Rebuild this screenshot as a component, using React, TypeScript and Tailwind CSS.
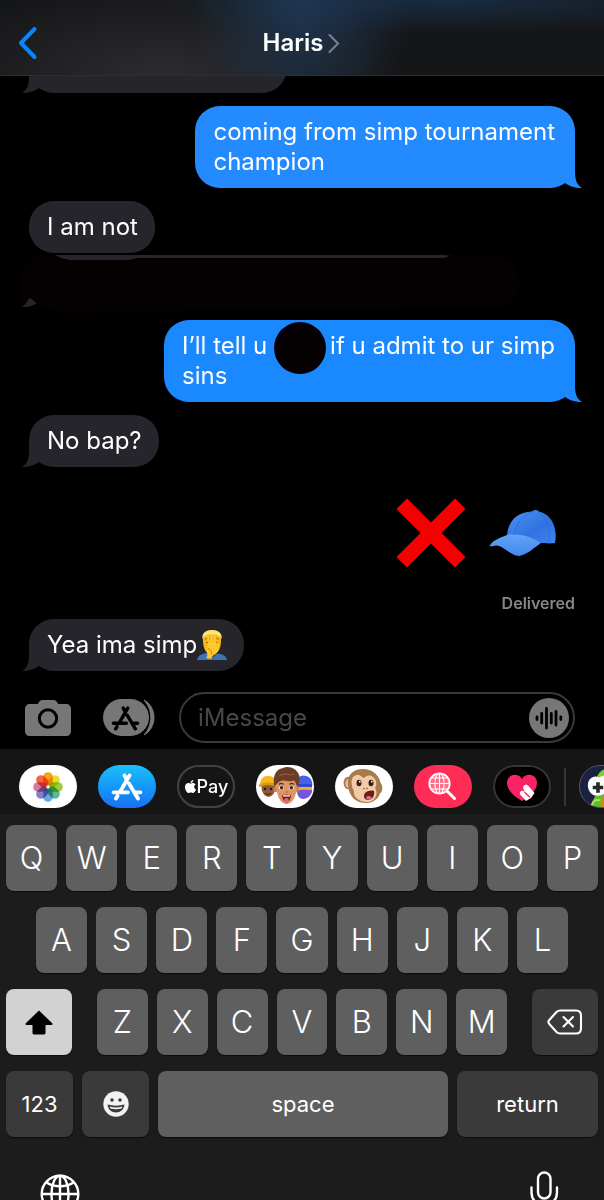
import React, { useState } from 'react';
import { FaApple } from 'react-icons/fa';

type Side = 'sent' | 'received';

function Tail({ side, className }: { side: Side; className: string }) {
  return (
    <svg
      aria-hidden="true"
      viewBox="0 0 24 24"
      className={`absolute bottom-0 h-6 w-6 ${side === 'sent' ? '-right-[7px]' : '-left-[7px] -scale-x-100'} ${className}`}
    >
      <path d="M17 0V8C17 16 19 21 24 24C17 24 11 22 7 19V0Z" fill="currentColor" />
    </svg>
  );
}

interface BubbleProps {
  side: Side;
  tail?: boolean;
  light?: boolean;
  className?: string;
  children?: React.ReactNode;
}

function Bubble({ side, tail = true, light = false, className = '', children }: BubbleProps) {
  const sentBg = light ? 'bg-[#248bff]' : 'bg-[#1a88ff]';
  const sentText = light ? 'text-[#248bff]' : 'text-[#1a88ff]';
  return (
    <div
      className={`relative min-h-[52px] shrink-0 rounded-[25px] py-[11px] text-2xl leading-[30px] text-white ${
        side === 'sent' ? `self-end pr-5 pl-[18px] ${sentBg}` : 'self-start bg-[#26252b] pr-[17px] pl-[18px]'
      } ${className}`}
    >
      {tail && <Tail side={side} className={side === 'sent' ? sentText : 'text-[#26252b]'} />}
      <p className="relative">{children}</p>
    </div>
  );
}

function FacepalmEmoji() {
  return (
    <svg role="img" aria-label="Man facepalming" viewBox="0 0 30 30" className="inline-block h-[30px] w-[30px] align-top">
      <path d="M0 30C1 25 6 23 11 23L16 27L19 24C24 23 29 25 30 30Z" fill="#3d72b4" />
      <path d="M6 11C5 4 10 0 15 0S25 4 24 11C24 18 21 24 15 26C9 24 6 18 6 11Z" fill="#f7b718" />
      <path d="M5.5 9C4.5 3 9 0 15 0S25.5 3 24.5 9C23 5.5 20 4 15 4.5C10 4 7 5.5 5.5 9Z" fill="#ffe27a" />
      <path d="M8 9.5C10 8 12 8 13 9.5M17 9.5C18 8 20 8 22 9.5M9 12.5H12.5M17 12.5H20.5" stroke="#a8690a" strokeWidth="1" fill="none" />
      <path d="M10 15C13 12 18 12 22 14C23 19 20 23 16 25L14 29L9 28C12 25 9 20 10 15Z" fill="#ffc82a" />
      <path d="M11 7L12.5 15M14.5 6L15 14M18 7L17.5 15" stroke="#ffce38" strokeWidth="1.8" strokeLinecap="round" />
      <path d="M11.5 18C12.5 21 15 20 14.5 24" stroke="#c07a0e" strokeWidth="1" fill="none" />
    </svg>
  );
}

function CrossEmoji() {
  return (
    <svg role="img" aria-label="Cross mark" viewBox="0 0 70 70" className="h-[70px] w-[70px]">
      <path d="M0.5 11L11 0.5L35 24.5L59 0.5L69.5 11L45.5 35L69.5 59L59 69.5L35 45.5L11 69.5L0.5 59L24.5 35Z" fill="#f40000" />
    </svg>
  );
}

function CapEmoji() {
  return (
    <svg role="img" aria-label="Billed cap" viewBox="0 0 68 48" className="h-12 w-[68px]">
      <defs>
        <linearGradient id="capCrown" x1="0" y1="0" x2="1" y2="1">
          <stop offset="0" stopColor="#4c94f5" />
          <stop offset="0.6" stopColor="#2f72e0" />
          <stop offset="1" stopColor="#3f86ef" />
        </linearGradient>
        <linearGradient id="capBill" x1="0" y1="0" x2="0" y2="1">
          <stop offset="0" stopColor="#62a4f7" />
          <stop offset="1" stopColor="#4287ee" />
        </linearGradient>
      </defs>
      <path d="M18 27C19 12 28 3 43 2.5C45 0.5 48 0.5 50 2.5C62 5 69 18 66 34C60 35 56 34 52 34C40 29 30 25 18 27Z" fill="url(#capCrown)" />
      <path d="M43 3C33 7 27 15 25 26M50 3C58 10 61 20 60 34" stroke="#2d68cf" strokeWidth="0.7" fill="none" />
      <path d="M18 26C30 24 42 27 52 34C46 38 38 46 30 47C22 47 16 38 8 36.5C5 36 3 38 0.5 37C3 32 10 29 18 26Z" fill="url(#capBill)" />
    </svg>
  );
}

function AppStoreGlyph({ className }: { className: string }) {
  return (
    <svg aria-hidden="true" viewBox="0 0 32 29" className={className}>
      <path
        d="M18.5 3.5L9.5 19M6.5 24L5 26.5M13.5 3.5L15 6.5M18 11.5L27 26.5M2.5 20.3H17M24.5 20.3H29.5"
        stroke="currentColor"
        strokeWidth="3.8"
        strokeLinecap="round"
        fill="none"
      />
    </svg>
  );
}

const PETALS = [
  { angle: 0, fill: '#f9a11b' },
  { angle: 45, fill: '#e6e02c' },
  { angle: 90, fill: '#9ccb3f' },
  { angle: 135, fill: '#5cb893' },
  { angle: 180, fill: '#67a9dc' },
  { angle: 225, fill: '#8a7fc0' },
  { angle: 270, fill: '#d27ca6' },
  { angle: 315, fill: '#f3664a' },
];

function PhotosIcon() {
  return (
    <svg aria-hidden="true" viewBox="0 0 32 32" className="h-8 w-8">
      {PETALS.map((petal) => (
        <rect
          key={petal.angle}
          x="11.2"
          y="1.2"
          width="9.6"
          height="13.5"
          rx="4.8"
          fill={petal.fill}
          transform={`rotate(${petal.angle} 16 16)`}
          className="mix-blend-multiply"
        />
      ))}
    </svg>
  );
}

function MemojiIcon() {
  return (
    <svg aria-hidden="true" viewBox="0 0 58 43" className="h-full w-full">
      {/* left, hard hat */}
      <ellipse cx="12.5" cy="22" rx="7" ry="10" fill="#8d5a3b" />
      <path d="M4 20C4 13 9 10 14 11C18 12 20 15 20 18L4 21Z" fill="#f6b81f" />
      <path d="M3 20C8 17 14 17 19 19V21C13 20 8 20 3 22Z" fill="#dc9610" />
      <circle cx="9" cy="24" r="1.2" fill="#2b1a12" />
      <circle cx="15" cy="24" r="1.2" fill="#2b1a12" />
      <path d="M9 28C11 30 13 30 15 28" stroke="#5b2f20" strokeWidth="1.3" fill="none" />
      {/* right, blue beanie */}
      <path d="M40 20C40 12 46 9 50 11C55 12 57 17 56 22L54 26H42Z" fill="#4562e8" />
      <path d="M40 19H56V23H40Z" fill="#3049ce" />
      <path d="M41 22H56V28H41Z" fill="#f3ae2a" />
      <path d="M41 26C46 24 52 25 56 25C56 30 52 34 47 34C43 34 41 30 41 26Z" fill="#7353df" />
      {/* centre */}
      <ellipse cx="19.5" cy="24" rx="2.2" ry="3.2" fill="#c97f52" />
      <ellipse cx="41" cy="24" rx="2.2" ry="3.2" fill="#c97f52" />
      <path d="M20 17C20 9 24 6 30 6C37 6 41 11 41 19C41 30 37 39 30.5 39C24 39 20 30 20 17Z" fill="#dd9766" />
      <path d="M18.5 22C16 11 20 4 27 3C34 0 43.5 5 43.5 13C43.5 17 42.5 20 41 22C40.5 19 39.5 17 38 15.5C32 18 28 13 23 17C21 18 20 20 18.5 22Z" fill="#6b3c26" />
      <path d="M23 11C28 7 33 11 39 9" stroke="#8f5a38" strokeWidth="1.2" fill="none" />
      <path d="M23 19.5C24.5 18 26.5 18.5 27.5 19.5M33.5 19.5C35 18 37 18.5 38 19.5" stroke="#5d301c" strokeWidth="1.3" fill="none" />
      <ellipse cx="25.5" cy="22.8" rx="2.4" ry="1.9" fill="#fff" />
      <ellipse cx="35.5" cy="22.8" rx="2.4" ry="1.9" fill="#fff" />
      <circle cx="25.6" cy="22.8" r="1.7" fill="#36211a" />
      <circle cx="35.4" cy="22.8" r="1.7" fill="#36211a" />
      <path d="M29.5 26.5C30 27.5 31.5 27.5 32 26.5" stroke="#b66f47" strokeWidth="1.2" fill="none" />
      <path d="M26 30C29 29.2 32 29.2 35 30C34.5 34.5 33 36.5 30.5 36.5S26.5 34.5 26 30Z" fill="#751d1b" />
      <path d="M26.8 30.2H34.2L33.8 31.4H27.2Z" fill="#fff" />
      <path d="M28.5 33.5C29.5 32.7 31.5 32.7 32.5 33.5L32.3 37.5C31 39 29.7 39 28.7 37.5Z" fill="#e2686c" />
    </svg>
  );
}

function MonkeyIcon() {
  return (
    <svg aria-hidden="true" viewBox="0 0 58 43" className="h-full w-full">
      <ellipse cx="13" cy="18" rx="4.4" ry="6.2" fill="#a77b4c" />
      <ellipse cx="13.3" cy="18.5" rx="2.8" ry="4.2" fill="#f1b99b" />
      <ellipse cx="44" cy="23" rx="3.4" ry="5.5" fill="#a77b4c" />
      <path d="M13 20C12 10 18 4 28 4C38 4 46 11 46 22C46 32 40 38 31 38C20 38 14 31 13 20Z" fill="#a77b4c" />
      <path d="M17 20C15 13 20 9 24 10C27 11 28 13 29 13C31 11 34 9 38 12C42 15 42 20 40 23C44 29 40 37 32 37C23 37 18 31 19 26C18 24 17 23 17 20Z" fill="#f3caa5" />
      <ellipse cx="24" cy="18" rx="2.5" ry="3.3" fill="#31201a" />
      <ellipse cx="36" cy="18" rx="2.5" ry="3.3" fill="#31201a" />
      <circle cx="24.8" cy="16.7" r="0.9" fill="#fff" />
      <circle cx="36.8" cy="16.7" r="0.9" fill="#fff" />
      <path d="M28.5 23L29.5 24M32.5 23L31.5 24" stroke="#825039" strokeWidth="1.2" />
      <path d="M30 28C33 25.5 37 25 39 26C40 31 37 35 33 35C29 35 28 31 30 28Z" fill="#6a1e20" />
      <path d="M31 32C33 30 36 31 37 33C35 35 32 36 31 32Z" fill="#e3727a" />
    </svg>
  );
}

function ImageSearchIcon() {
  return (
    <svg aria-hidden="true" viewBox="0 0 58 43" className="h-full w-full">
      <g stroke="#fff" fill="none" strokeLinecap="round">
        <circle cx="25.5" cy="18.5" r="10.2" strokeWidth="1.8" fill="#ff6f88" />
        <ellipse cx="25.5" cy="18.5" rx="4.6" ry="10.2" strokeWidth="1.1" />
        <path d="M25.5 8.5V28.5M15.5 18.5H35.5M17.5 13H33.5M17.5 24H33.5" strokeWidth="1.1" />
        <path d="M33.5 26.5L40.5 33.5" strokeWidth="3" />
      </g>
    </svg>
  );
}

function TouchIcon() {
  return (
    <svg aria-hidden="true" viewBox="0 0 58 43" className="h-full w-full">
      <path d="M29 36C19 30 14 24 14 18C14 9 25 7 29 14C33 7 44 9 44 18C44 24 39 30 29 36Z" fill="#fb2364" />
      {/* two fingers coming in from the lower right */}
      <path d="M33 36L27.5 30C25.5 27.5 28.5 24.5 31 26.5L32 27.5L30.5 24C29 20.5 33 18 35.5 21L41.5 28L38 33Z" fill="#fff" />
      <path d="M32 27.5L36.5 32" stroke="#fb2364" strokeWidth="1.4" strokeLinecap="round" />
    </svg>
  );
}

function GameIcon() {
  return (
    <svg aria-hidden="true" viewBox="0 0 58 43" className="h-full w-full">
      <rect width="58" height="43" rx="21" fill="#1a2141" />
      <circle cx="29" cy="15" r="12" fill="#7bd034" />
      <path d="M10 43L17 28H46V43Z" fill="#69b92c" />
      <path d="M24 31L37 26V43H22Z" fill="#ee7a20" />
      <path d="M8 22C7 14 13 9 20 12C25 8 38 10 38 20C37 28 30 31 25 29C17 34 9 30 8 22Z" fill="#fafafa" />
      <path d="M18.5 17V28M13 22.5H24" stroke="#23272c" strokeWidth="3.8" />
      <path d="M12 42C13 36 16 35 21 36" stroke="#a7e85b" strokeWidth="2" fill="none" />
    </svg>
  );
}

function PillButton({ label, className, children }: { label: string; className: string; children: React.ReactNode }) {
  return (
    <button
      type="button"
      aria-label={label}
      className={`flex h-[43px] w-[58px] shrink-0 items-center justify-center overflow-hidden rounded-full ${className}`}
    >
      {children}
    </button>
  );
}

function Key({ label, onPress }: { label: string; onPress: (value: string) => void }) {
  return (
    <button
      type="button"
      onClick={() => onPress(label)}
      className="h-[66px] min-w-0 flex-1 rounded-lg bg-[#5f5f5f] text-[31px] font-light text-white shadow-[0_1px_1px_#0c0c0c]"
    >
      {label}
    </button>
  );
}

const ROWS = ['QWERTYUIOP', 'ASDFGHJKL', 'ZXCVBNM'];

export default function App() {
  const [message, setMessage] = useState('');

  const type = (value: string) => setMessage((current) => current + value);

  return (
    <div className="flex h-screen flex-col overflow-hidden bg-black font-['Inter','Liberation_Sans',sans-serif]">
      <header className="z-10 grid h-[76px] shrink-0 grid-cols-[1fr_auto_1fr] items-center border-b border-[#2c2f32] bg-[#151617] bg-[radial-gradient(110px_130px_at_50%_0%,#1e3653_0%,transparent_100%),radial-gradient(300px_34px_at_74%_0%,#182c42_0%,transparent_100%),radial-gradient(240px_90px_at_27%_100%,#2c2c2e_0%,transparent_100%)] px-[18px] pt-2.5">
        <button type="button" aria-label="Back" className="justify-self-start">
          <svg aria-hidden="true" viewBox="0 0 20 34" className="h-[34px] w-5">
            <path d="M16.5 3L3 17L16.5 31" stroke="#0a84ff" strokeWidth="4" strokeLinecap="round" strokeLinejoin="round" fill="none" />
          </svg>
        </button>
        <button type="button" className="flex items-center gap-1 text-2xl font-semibold text-white">
          <h1>Haris</h1>
          <svg aria-hidden="true" viewBox="0 0 14 20" className="h-5 w-3.5">
            <path d="M2.5 2L11 10.5L2.5 19" stroke="#7e8389" strokeWidth="2" strokeLinecap="round" fill="none" />
          </svg>
        </button>
      </header>

      <main className="flex min-h-0 flex-1 flex-col justify-end overflow-hidden px-[29px] pb-[21px]">
        <Bubble side="received" className="w-[258px]" />
        <Bubble side="sent" light className="mt-[13px]">
          coming from simp tournament
          <br />
          champion
        </Bubble>
        <Bubble side="received" tail={false} className="mt-[13px]">
          I am not
        </Bubble>
        {/* blacked out message, only its rim and tail stay visible */}
        <div className="relative mt-0.5 h-[52px] w-[440px] shrink-0 rounded-[25px] bg-[#26252b]">
          <Tail side="received" className="text-[#26252b]" />
          <svg aria-hidden="true" viewBox="0 0 500 56" className="absolute top-0 -left-2 h-14 w-[500px]">
            <path
              d="M0 30C0 12 8 2 20 0L34 0Q40 4 50 5H108L116 3H424L430 0H476C492 2 498 14 498 28C498 44 488 52 470 54L40 56C26 56 20 52 14 47L9 43L0 52Z"
              fill="#050102"
            />
            <path d="M1 52C5 50 7 47 8 43L14 48C10 51 6 52 1 52Z" fill="#26252b" />
          </svg>
        </div>
        <Bubble side="sent" className="mt-[13px]">
          I’ll tell u{' '}
          <span className="relative mr-1 inline-block w-[52px]">
            <span className="absolute -top-8 left-0 h-[52px] w-[52px] rounded-full bg-[#050102]" />
          </span>
          if u admit to ur simp
          <br />
          sins
        </Bubble>
        <Bubble side="received" className="mt-[13px]">
          No bap?
        </Bubble>
        <div className="mt-[31px] mr-[18px] flex shrink-0 items-center gap-[23px] self-end">
          <CrossEmoji />
          <CapEmoji />
        </div>
        <p className="mt-[25px] shrink-0 self-end text-base leading-5 font-semibold text-[#87868b]">Delivered</p>
        <Bubble side="received" className="mt-1.5">
          Yea ima simp
          <FacepalmEmoji />
        </Bubble>
      </main>

      <form className="flex shrink-0 items-center pr-[29px] pb-1.5 pl-[25px]" onSubmit={(e) => e.preventDefault()}>
        <button type="button" aria-label="Camera" className="mr-8 shrink-0">
          <svg aria-hidden="true" viewBox="0 0 46 36" className="h-9 w-[46px]">
            <path d="M5 4H12C14 4 14 0 17 0H29C32 0 32 4 34 4H41C44 4 46 6 46 9V31C46 34 44 36 41 36H5C2 36 0 34 0 31V9C0 6 2 4 5 4Z" fill="#77777a" />
            <circle cx="23" cy="18.5" r="8.7" stroke="#000" strokeWidth="3" fill="none" />
          </svg>
        </button>
        <button type="button" aria-label="Apps" className="relative mr-6 flex h-[37px] w-[52px] shrink-0 items-center text-black">
          <svg aria-hidden="true" viewBox="0 0 52 37" className="absolute inset-0 h-full w-full">
            <path d="M41 1C47 4 51 11 51 18.5S47 33 41 36C50 26 50 11 41 1Z" fill="#77777a" stroke="#77777a" />
            <rect width="46" height="37" rx="18.5" fill="#77777a" />
          </svg>
          <AppStoreGlyph className="relative ml-2 h-[26px] w-[29px]" />
        </button>
        <div className="flex h-[51px] min-w-0 flex-1 items-center rounded-full border-2 border-[#39393c] pr-1 pl-[17px]">
          <input
            type="text"
            aria-label="iMessage"
            placeholder="iMessage"
            value={message}
            onChange={(e) => setMessage(e.target.value)}
            className="min-w-0 flex-1 bg-transparent text-2xl text-white outline-none placeholder:text-[#48484b]"
          />
          <button type="button" aria-label="Record audio" className="shrink-0">
            <svg aria-hidden="true" viewBox="0 0 40 40" className="h-10 w-10">
              <circle cx="20" cy="20" r="20" fill="#77777a" />
              <path
                d="M8 19V21.5M12.7 15.5V25M17.5 10.5V30M22.3 15.5V25M27 13.5V27M31.8 19V21.5"
                stroke="#000"
                strokeWidth="2.8"
                strokeLinecap="round"
              />
            </svg>
          </button>
        </div>
      </form>

      <nav aria-label="iMessage apps" className="flex shrink-0 gap-[21px] overflow-hidden bg-[#151515] pt-4 pb-1.5 pl-[19px]">
        <PillButton label="Photos" className="bg-white">
          <PhotosIcon />
        </PillButton>
        <PillButton label="App Store" className="bg-linear-to-b from-[#1cc0fb] to-[#1d6ff2] text-white">
          <AppStoreGlyph className="h-[29px] w-8" />
        </PillButton>
        <PillButton label="Apple Pay" className="border-2 border-[#434343] bg-[#151515] text-white">
          <FaApple className="h-[15px] w-[13px] shrink-0" />
          <span className="text-lg font-medium">Pay</span>
        </PillButton>
        <PillButton label="Memoji" className="bg-white">
          <MemojiIcon />
        </PillButton>
        <PillButton label="Animoji" className="bg-white">
          <MonkeyIcon />
        </PillButton>
        <PillButton label="Images" className="bg-[#ff2d55]">
          <ImageSearchIcon />
        </PillButton>
        <PillButton label="Digital Touch" className="bg-black ring-2 ring-[#363636] ring-inset">
          <TouchIcon />
        </PillButton>
        <div className="-mx-2 h-[38px] w-0.5 shrink-0 self-center bg-[#363638]" />
        <PillButton label="Games" className="border border-[#565b70] bg-[#1a2141]">
          <GameIcon />
        </PillButton>
      </nav>

      <section aria-label="Keyboard" className="shrink-0 bg-[#1c1c1c] px-1.5 pt-[11px]">
        <div className="flex flex-col gap-4">
          <div className="flex gap-[9px]">
            {ROWS[0].split('').map((letter) => (
              <Key key={letter} label={letter} onPress={type} />
            ))}
          </div>
          <div className="flex gap-[9px] px-[30px]">
            {ROWS[1].split('').map((letter) => (
              <Key key={letter} label={letter} onPress={type} />
            ))}
          </div>
          <div className="flex gap-[25px]">
            <button
              type="button"
              aria-label="Shift"
              className="flex h-[66px] w-[66px] shrink-0 items-center justify-center rounded-lg bg-[#d2d2d2] shadow-[0_1px_1px_#0c0c0c]"
            >
              <svg aria-hidden="true" viewBox="0 0 28 25" className="h-[25px] w-7">
                <path d="M14 0.5L27 13C28 14 27.5 15 26.5 15H20.5V22.5C20.5 24 20 24.5 18.5 24.5H9.5C8 24.5 7.5 24 7.5 22.5V15H1.5C0.5 15 0 14 1 13Z" fill="#000" />
              </svg>
            </button>
            <div className="flex min-w-0 flex-1 gap-[9px]">
              {ROWS[2].split('').map((letter) => (
                <Key key={letter} label={letter} onPress={type} />
              ))}
            </div>
            <button
              type="button"
              aria-label="Delete"
              onClick={() => setMessage((current) => current.slice(0, -1))}
              className="flex h-[66px] w-[66px] shrink-0 items-center justify-center rounded-lg bg-[#3a3a3a] shadow-[0_1px_1px_#0c0c0c]"
            >
              <svg aria-hidden="true" viewBox="0 0 36 26" className="h-[26px] w-9">
                <g stroke="#fff" strokeWidth="2.1" fill="none" strokeLinecap="round" strokeLinejoin="round">
                  <path d="M13 1.5H29C32.5 1.5 34 3 34 6.5V19.5C34 23 32.5 24.5 29 24.5H13C11.5 24.5 10.5 24 9.5 23L2.3 15C1.2 13.7 1.2 12.3 2.3 11L9.5 3C10.5 2 11.5 1.5 13 1.5Z" />
                  <path d="M16.5 8L26 17.5M26 8L16.5 17.5" />
                </g>
              </svg>
            </button>
          </div>
          <div className="flex gap-[9px] text-[22px] text-white">
            <button type="button" className="h-[66px] w-[67px] shrink-0 rounded-lg bg-[#3a3a3a] shadow-[0_1px_1px_#0c0c0c]">
              123
            </button>
            <button
              type="button"
              aria-label="Emoji"
              className="flex h-[66px] w-[67px] shrink-0 items-center justify-center rounded-lg bg-[#3a3a3a] shadow-[0_1px_1px_#0c0c0c]"
            >
              <svg aria-hidden="true" viewBox="0 0 26 26" className="h-[26px] w-[26px]">
                <circle cx="13" cy="13" r="12.7" fill="#f2f2f2" />
                <circle cx="9" cy="9" r="1.8" fill="#3a3a3a" />
                <circle cx="17" cy="9" r="1.8" fill="#3a3a3a" />
                <path d="M4.5 13.5C10 15 16 15 21.5 13.5C21 18.5 17.5 21.5 13 21.5S5 18.5 4.5 13.5Z" fill="#3a3a3a" />
                <path d="M6.5 15.5C11 16.7 15 16.7 19.5 15.5L18.5 17.5C15 18.5 11 18.5 7.5 17.5Z" fill="#f2f2f2" />
              </svg>
            </button>
            <button
              type="button"
              onClick={() => type(' ')}
              className="h-[66px] min-w-0 flex-1 rounded-lg bg-[#5f5f5f] shadow-[0_1px_1px_#0c0c0c]"
            >
              space
            </button>
            <button type="button" className="h-[66px] w-[141px] shrink-0 rounded-lg bg-[#3a3a3a] shadow-[0_1px_1px_#0c0c0c]">
              return
            </button>
          </div>
        </div>
        {/* runs past the bottom edge of the screen */}
        <div className="flex h-[63px] items-start justify-between overflow-hidden px-[34px] pt-[34px]">
          <button type="button" aria-label="Next keyboard" className="shrink-0 pt-[3px]">
            <svg aria-hidden="true" viewBox="0 0 40 40" className="h-10 w-10">
              <g stroke="#fff" strokeWidth="2.4" fill="none">
                <circle cx="20" cy="20" r="18.3" />
                <ellipse cx="20" cy="20" rx="8.5" ry="18.3" />
                <path d="M20 2V38M2 20H38M6.5 8.5C14 13.5 26 13.5 33.5 8.5M6.5 31.5C14 26.5 26 26.5 33.5 31.5" />
              </g>
            </svg>
          </button>
          <button type="button" aria-label="Dictate" className="shrink-0">
            <svg aria-hidden="true" viewBox="0 0 40 44" className="h-11 w-10">
              <g stroke="#fff" strokeWidth="2.4" fill="none" strokeLinecap="round">
                <rect x="14" y="1.5" width="12.5" height="26" rx="6.2" />
                <path d="M7.5 16.5V21.5C7.5 29 13 34 20.2 34S33 29 33 21.5V16.5M20.2 34V41M13 41.5H27.5" />
              </g>
            </svg>
          </button>
        </div>
      </section>
    </div>
  );
}
